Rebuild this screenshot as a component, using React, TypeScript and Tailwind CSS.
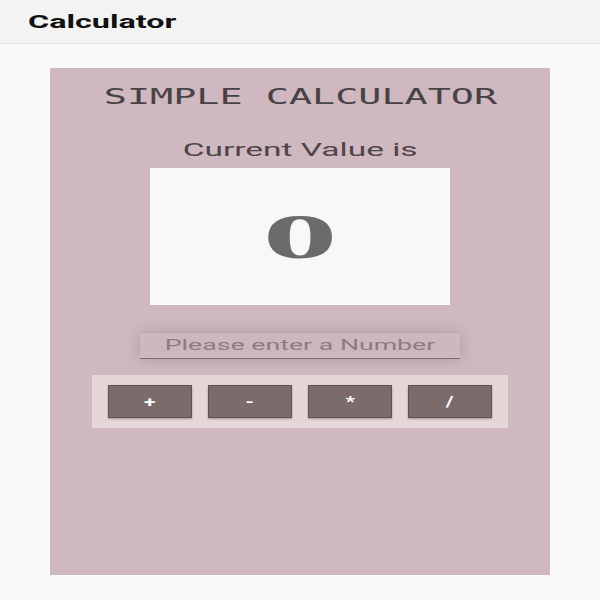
import React from "react";

export default function App() {
  const ops = ["+", "-", "*", "/"];
  return (
    <div className="w-[600px] h-[600px] bg-[#fafafa] flex flex-col overflow-hidden" style={{ fontFamily: "Roboto, 'Liberation Sans', sans-serif" }}>
      <div className="h-[44px] bg-[#f3f3f3] border-b border-[#e2e2e2] flex items-center pl-[28px] shrink-0">
        <span className="inline-block origin-left scale-x-[1.7] text-[19px] font-bold text-[#111] leading-none">Calculator</span>
      </div>
      <div className="flex justify-center pt-[24px]">
        <div className="w-[500px] h-[507px] bg-[#cfb8bf] flex flex-col items-center">
          <div className="mt-[15px] h-[28px] flex items-center justify-center">
            <span className="inline-block scale-x-[1.83] text-[21px] leading-none text-[#484246]" style={{ fontFamily: "'DejaVu Sans Mono', monospace" }}>SIMPLE CALCULATOR</span>
          </div>
          <div className="mt-[27px] h-[24px] flex items-center justify-center">
            <span className="inline-block scale-x-[1.86] text-[18px] leading-none text-[#4d4549]">Current Value is</span>
          </div>
          <div className="mt-[6px] w-[300px] h-[137px] bg-[#f8f8f8] flex items-center justify-center">
            <span className="inline-block scale-x-[2.35] text-[64px] font-bold leading-none text-[#6b6b6b]" style={{ fontFamily: "'Liberation Serif', serif" }}>0</span>
          </div>
          <div className="mt-[28px] w-[320px] h-[26px] border-b-[1.5px] border-[#7d6e72] shadow-[0_0_14px_rgba(120,90,100,0.35)] flex justify-center">
            <div className="w-[310px] h-full bg-[#cdb6bd] flex items-center justify-center">
              <span className="inline-block scale-x-[1.78] text-[15px] leading-none text-[#8c7b82]">Please enter a Number</span>
            </div>
          </div>
          <div className="mt-[16px] w-[416px] bg-[#e5d6d7] px-[16px] py-[10px] flex gap-[16px]">
            {ops.map((o) => (
              <div key={o} className="w-[84px] h-[33px] bg-[#7b6b6b] border border-[#5f5252] shadow-[0_1px_2px_rgba(0,0,0,0.3)] flex items-center justify-center">
                <span className="inline-block scale-x-[1.5] text-[14px] font-bold text-white leading-none">{o}</span>
              </div>
            ))}
          </div>
        </div>
      </div>
    </div>
  );
}
